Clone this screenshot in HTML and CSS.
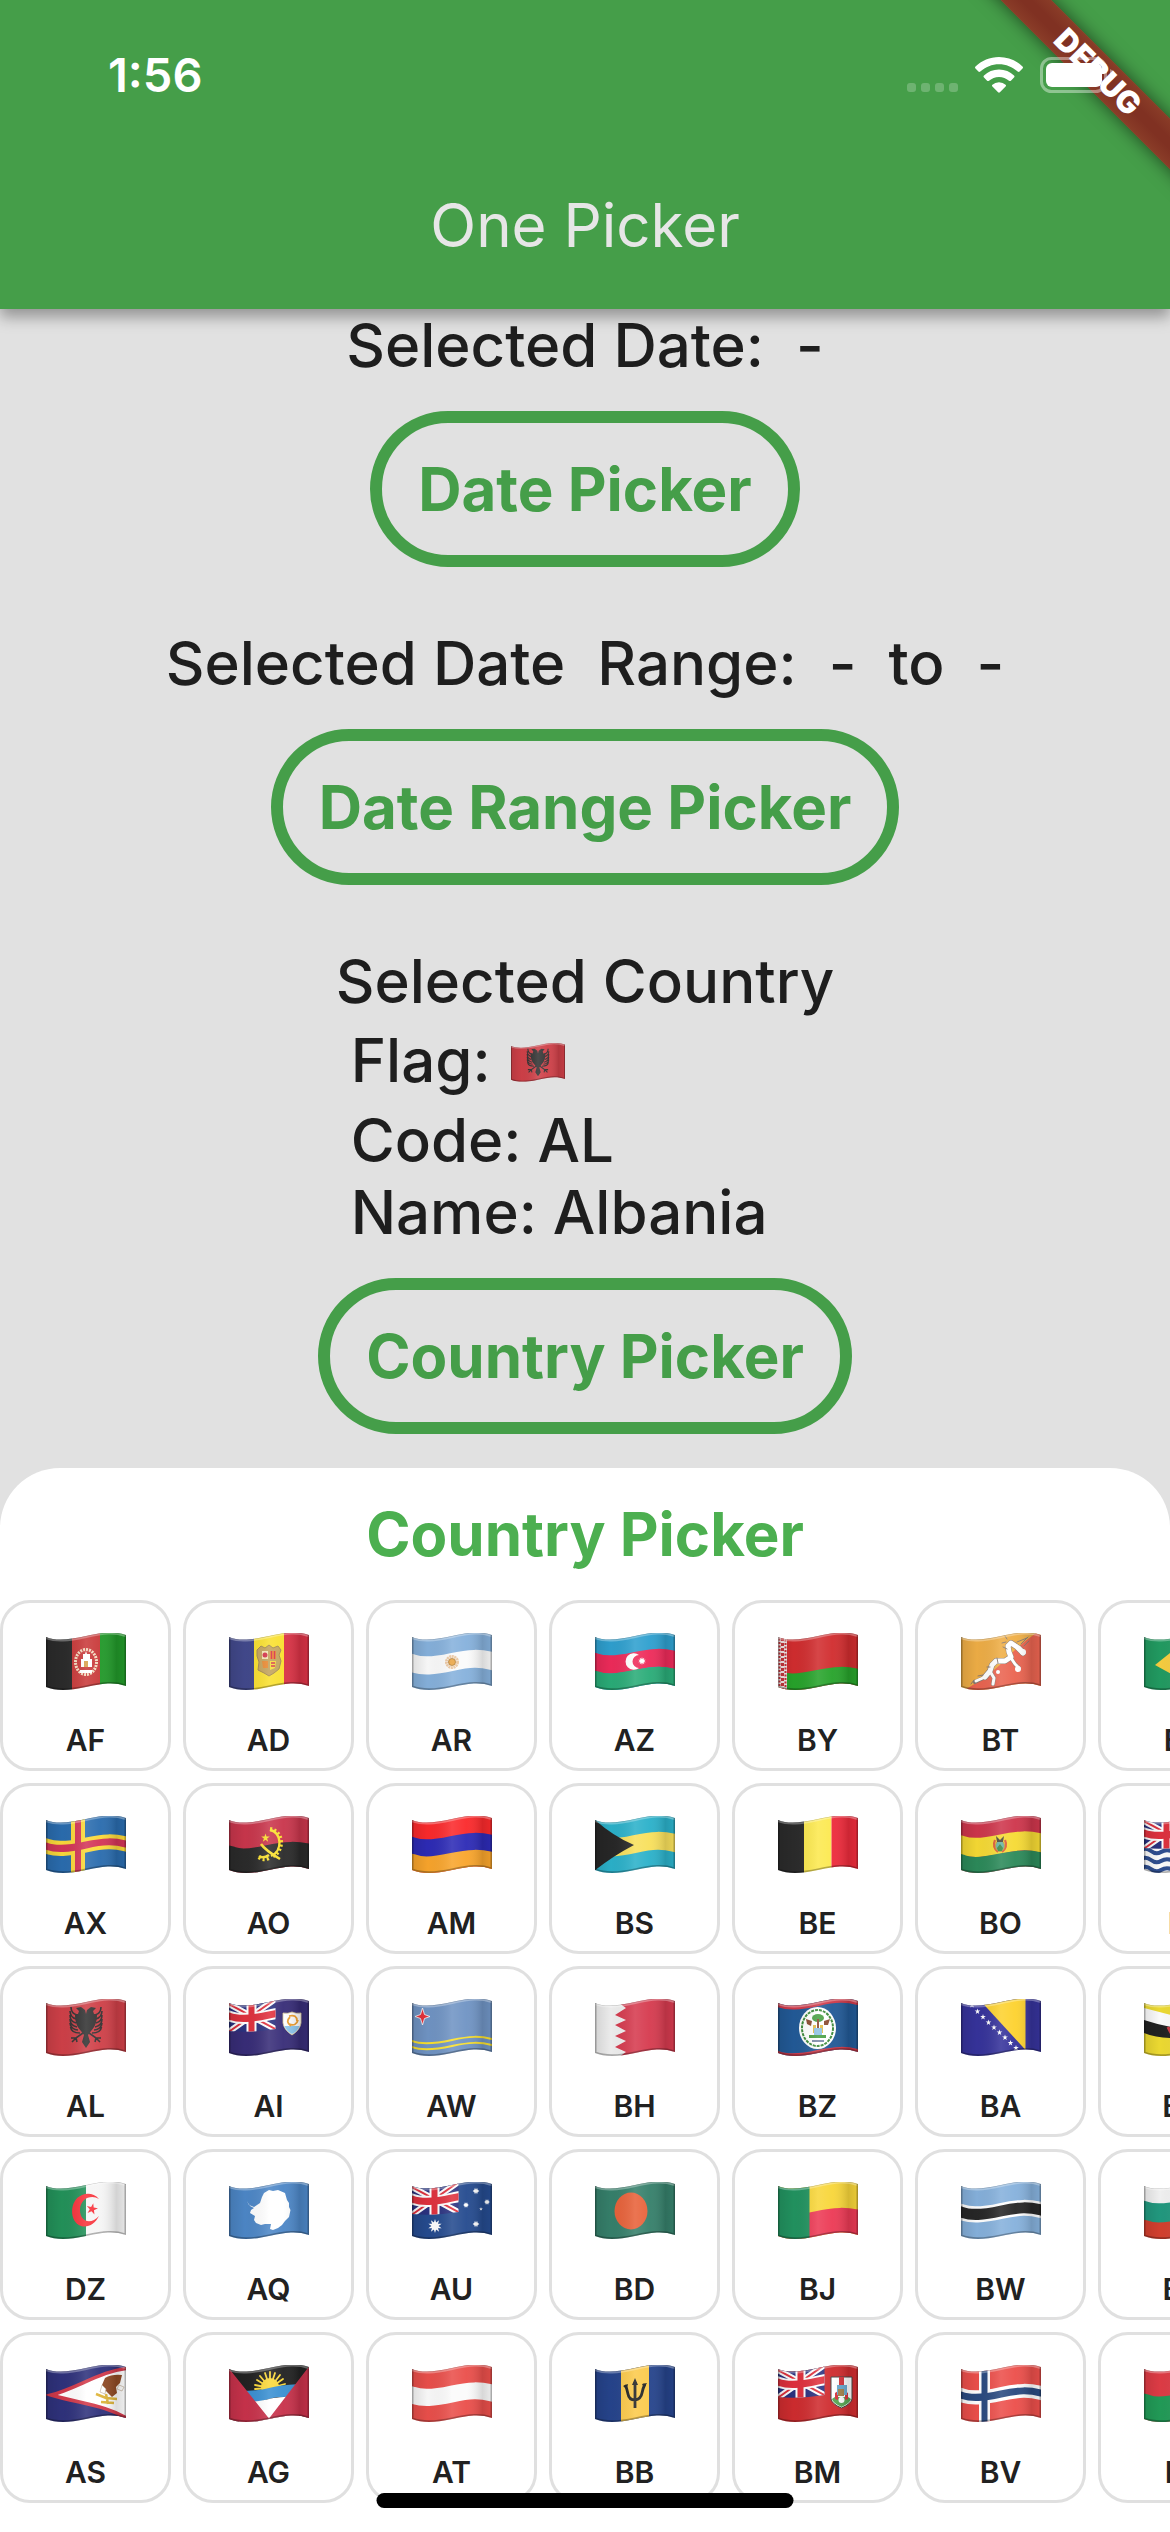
FILE: index.html
```html
<!DOCTYPE html>
<html lang="en">
<head>
<meta charset="utf-8">
<meta name="viewport" content="width=device-width, initial-scale=1">
<title>One Picker</title>
<link rel="stylesheet" href="styles.css">
</head>
<body>

<!-- Shapes shared by every flag -->
<svg class="defs" width="0" height="0" aria-hidden="true">
  <defs>
    <clipPath id="cloth"><path d="M0 4C10 8 22 7 40 3S68-2 80 2V53C68 49 58 50 40 54S10 58 0 54Z"/></clipPath>
    <clipPath id="canton-clip"><path d="M0 0H46.500V30Q22 34 0 32Z"/></clipPath>
    <linearGradient id="folds">
      <stop offset="0" stop-color="#000" stop-opacity=".12"/>
      <stop offset=".2" stop-color="#000" stop-opacity=".02"/>
      <stop offset=".5" stop-color="#fff" stop-opacity=".12"/>
      <stop offset=".68" stop-color="#fff" stop-opacity=".04"/>
      <stop offset=".88" stop-color="#000" stop-opacity=".14"/>
      <stop offset="1" stop-color="#000" stop-opacity=".06"/>
    </linearGradient>
    <path id="w" fill="none" d="M-4-1 0 0C10 4 22 3 40-1S68-5 80-2L84-1"/>
    <path id="star" d="M0-1 .22-.31 .95-.31 .36.12 .59.81 0 .38-.59.81-.36.12-.95-.31-.22-.31Z"/>
    <g id="bigstar"><use href="#star"/><use href="#star" transform="rotate(36)"/></g>
    <g id="shade">
      <path fill="url(#folds)" d="M0-2H80V60H0Z"/>
      <path fill="none" stroke="#fff" stroke-opacity=".3" stroke-width="4" d="M0 4C10 8 22 7 40 3S68-2 80 2"/>
      <path fill="none" stroke="#000" stroke-opacity=".28" stroke-width="3" d="M80 2V53C68 49 58 50 40 54S10 58 0 54V4"/>
      <path fill="none" stroke="#000" stroke-opacity=".2" stroke-width="1" d="M0 4C10 8 22 7 40 3S68-2 80 2"/>
    </g>
    <g id="canton" clip-path="url(#canton-clip)">
      <path fill="#2b3280" d="M0 0H47V34H0Z"/>
      <path stroke="#fff" stroke-width="6" d="M-2 4 48 31M48-1-2 34"/>
      <path stroke="#e0313e" stroke-width="2" d="M-2 4 48 31M48-1-2 34"/>
      <path stroke="#fff" stroke-width="10" d="M22.500 0V34"/>
      <use href="#w" y="17" stroke="#fff" stroke-width="11"/>
      <path stroke="#e0313e" stroke-width="6" d="M22.500 0V34"/>
      <use href="#w" y="17" stroke="#e0313e" stroke-width="7"/>
    </g>
    <g id="eagle-half" fill="#333" stroke="none">
      <path d="M0 15 1 11 5 8 10 9 7 12 8 15 11 15C11 21 10 27 5 32L2 36 4 43 0 49Z"/>
      <path fill="none" stroke="#333" stroke-width="1.600" d="M9 16C13 15 15 12 15 8M10 20C13 19 16 16 16 12M10 24C14 23 16 20 16 16M9 28C13 27 16 24 16 20M8 31C12 31 16 28 16 24M6 34C11 34 15 32 15.500 28M3 34 10 39 15 39M10 39 9 43M10 39 14 43"/>
    </g>
    <symbol id="flag-al" viewBox="0 0 80 57">
      <g clip-path="url(#cloth)">
        <path fill="#cf4048" d="M0-2H80V60H0Z"/>
        <use href="#eagle-half" transform="translate(40 0)"/>
        <use href="#eagle-half" transform="translate(40 0) scale(-1 1)"/>
        <use href="#shade"/>
      </g>
    </symbol>
  </defs>
</svg>

<div class="app">
  <header class="app-bar">
    <div class="banner-corner" aria-hidden="true"><span class="banner">DEBUG</span></div>
    <div class="status-bar">
      <span class="clock">1:56</span>
      <div class="status-icons">
        <svg width="51" height="36" viewBox="0 0 51 36" aria-hidden="true"><g fill="#fff" opacity=".22"><rect y="26" width="9" height="9" rx="3"/><rect x="14" y="26" width="9" height="9" rx="3"/><rect x="28" y="26" width="9" height="9" rx="3"/><rect x="42" y="26" width="9" height="9" rx="3"/></g></svg>
        <svg width="48" height="36" viewBox="0 0 48 36" role="img" aria-label="Wi-Fi"><path fill="#fff" d="M24 0C33 0 41.500 3.600 47.500 9.500Q48.500 10.600 47.500 11.600L44.600 14.600Q43.700 15.500 42.700 14.600C37.500 9.800 31 7.200 24 7.200S10.500 9.800 5.300 14.600Q4.300 15.500 3.400 14.600L.5 11.600Q-.5 10.600 .5 9.500C6.500 3.600 15 0 24 0ZM24 12.600C30 12.600 35 14.900 39 18.600Q40 19.600 39 20.600L35.900 23.700Q35 24.500 34 23.700C31 21.200 28 19.900 24 19.900S17 21.200 14 23.700Q13 24.500 12.100 23.700L9 20.600Q8 19.600 9 18.600C13 14.900 18 12.600 24 12.600ZM24 25.200Q28 25.200 30.600 27.700 31.500 28.600 30.600 29.500L24.900 35.300Q24 36.200 23.100 35.300L17.400 29.500Q16.500 28.600 17.400 27.700 20 25.200 24 25.200Z"/></svg>
        <svg width="75" height="36" viewBox="0 0 75 36" role="img" aria-label="Battery full"><rect x="1.500" y="1.500" width="64" height="33" rx="10" fill="none" stroke="#fff" stroke-opacity=".4" stroke-width="3"/><rect x="6" y="6" width="56" height="24" rx="6" fill="#fff"/><path fill="#fff" fill-opacity=".4" d="M70 12Q75 14 75 18T70 24Z"/></svg>
      </div>
    </div>
    <h1 class="app-title">One Picker</h1>
  </header>

  <main class="content">
    <section class="group">
      <p class="line">Selected Date:&nbsp; -</p>
      <button class="pill" type="button">Date Picker</button>
    </section>
    <section class="group">
      <p class="line">Selected Date&nbsp; Range:&nbsp; -&nbsp; to&nbsp; -</p>
      <button class="pill" type="button">Date Range Picker</button>
    </section>
    <section class="group">
      <div class="country">
        <p class="line">Selected Country</p>
        <div class="details">
          <p class="line flag-line">Flag: <svg class="mini-flag" role="img" aria-label="Albania"><use href="#flag-al"/></svg></p>
          <p class="line">Code: AL</p>
          <p class="line">Name: Albania</p>
        </div>
      </div>
      <button class="pill" type="button">Country Picker</button>
    </section>
  </main>

  <section class="sheet">
    <h2 class="sheet-title">Country Picker</h2>
    <div class="grid">
      <button class="card" type="button"><svg class="flag" viewBox="0 0 80 57" aria-hidden="true"><g clip-path="url(#cloth)"><path fill="#2b2b2b" d="M0-2H26V60H0Z"/><path fill="#c93a3a" d="M26-2H54V60H26Z"/><path fill="#22992a" d="M54-2H80V60H54Z"/><ellipse cx="40" cy="29" rx="10.500" ry="12.500" fill="none" stroke="#f3dcc0" stroke-width="3" stroke-dasharray="2 1"/><path fill="#fff" d="M35 34V26H37V21H39L40 18 41 21H44V26H46V34ZM34 37H46V40H34Z"/><path fill="#d8a04a" d="M38 34V28H42V34Z"/><use href="#shade"/></g></svg><span>AF</span></button>
      <button class="card" type="button"><svg class="flag" viewBox="0 0 80 57" aria-hidden="true"><g clip-path="url(#cloth)"><path fill="#2a6cae" d="M0-2H80V60H0Z"/><path stroke="#fbd93a" stroke-width="14" d="M32-2V60"/><use href="#w" y="30" stroke="#fbd93a" stroke-width="15"/><path stroke="#d33558" stroke-width="6" d="M32-2V60"/><use href="#w" y="30" stroke="#d33558" stroke-width="7"/><use href="#shade"/></g></svg><span>AX</span></button>
      <button class="card" type="button"><svg class="flag" aria-hidden="true"><use href="#flag-al"/></svg><span>AL</span></button>
      <button class="card" type="button"><svg class="flag" viewBox="0 0 80 57" aria-hidden="true"><g clip-path="url(#cloth)"><path fill="#23925a" d="M0-2H40V60H0Z"/><path fill="#f5f5f5" d="M40-2H80V60H40Z"/><path fill="#f8333c" d="M53 17C48 11 41 11 36 13 23 18 23 40 35 44 42 46 49 42 53 34 45 43 34 40 34 28S46 12 53 17Z"/><use href="#star" fill="#f8333c" transform="translate(46 27) rotate(12) scale(6)"/><use href="#shade"/></g></svg><span>DZ</span></button>
      <button class="card" type="button"><svg class="flag" viewBox="0 0 80 57" aria-hidden="true"><g clip-path="url(#cloth)"><path fill="#2f327c" d="M0-2H80V60H0Z"/><path fill="#fff" stroke="#d23a4b" stroke-width="3.500" d="M5 30C30 24 56 5 84 3V55C60 40 36 39 5 30Z"/><path fill="#8f4a24" d="M56 20 59 13Q66 9 76 10L74 18 70 22 71 28 66 32 60 26 56 27Z"/><path fill="#fff" stroke="#b8a58c" stroke-width=".6" d="M56 20 60 24 59 29 54 27ZM73 20 78 22 76 26 71 24Z"/><path fill="none" stroke="#dfb63c" stroke-width="2.500" d="M50 29 60 33 71 34M55 37 68 38M60 29 62 39"/><use href="#shade"/></g></svg><span>AS</span></button>

      <button class="card" type="button"><svg class="flag" viewBox="0 0 80 57" aria-hidden="true"><g clip-path="url(#cloth)"><path fill="#42498c" d="M0-2H25V60H0Z"/><path fill="#f9e02f" d="M25-2H55V60H25Z"/><path fill="#db3346" d="M55-2H80V60H55Z"/><path fill="#c3a35c" stroke="#a38a50" stroke-width="1" d="M28 17 32 13 36 15 40 12 44 15 49 13 52 17 50 22 52 28 50 36 45 40 40 43 35 40 29 37 30 29 28 23Z"/><path fill="#f4e5b5" d="M33 18H39V26H33Z"/><circle cx="36" cy="22" r="2.500" fill="#d5344a"/><path fill="#e98a32" d="M41 18H47V26H41ZM33 28H39V35H34Z"/><path fill="#f5dc3c" d="M41 28H47L46 35 41 37Z"/><path stroke="#d5344a" stroke-width="1.300" d="M42.500 18V26M45.500 18V26M42 30H46M42 33H46"/><use href="#shade"/></g></svg><span>AD</span></button>
      <button class="card" type="button"><svg class="flag" viewBox="0 0 80 57" aria-hidden="true"><g clip-path="url(#cloth)"><path fill="#c9364c" d="M0-2H80V60H0Z"/><use href="#w" y="48" stroke="#2b2b2b" stroke-width="36"/><path fill="none" stroke="#f9e02f" stroke-width="2.400" d="M41 14C53 16 54 35 42 40"/><path fill="none" stroke="#f9e02f" stroke-width="4" stroke-dasharray="2 2.200" d="M41 13C55 15 56 36 42 41M30 41Q34 45 40 42"/><path fill="none" stroke="#f9e02f" stroke-width="2.600" d="M32 28Q36 34 51 43M30 40Q34 43 40 39"/><use href="#star" fill="#f9e02f" transform="translate(36.500 22) scale(4.500)"/><use href="#shade"/></g></svg><span>AO</span></button>
      <button class="card" type="button"><svg class="flag" viewBox="0 0 80 57" aria-hidden="true"><g clip-path="url(#cloth)"><path fill="#382d78" d="M0-2H80V60H0Z"/><use href="#canton"/><path fill="#fff" stroke="#d9c995" stroke-width=".8" d="M54 14Q59 15 63 13 67 15 72 14V24Q71 31 63 36 55 31 54 24Z"/><path fill="#8fc8ef" d="M55.500 27H70.500Q69 32 63 35 57 32 55.500 27Z"/><path fill="none" stroke="#f0a030" stroke-width="1.800" d="M60 17Q68 15 68 22M69 21Q67 28 60 25M62 27Q56 23 61 18"/><use href="#shade"/></g></svg><span>AI</span></button>
      <button class="card" type="button"><svg class="flag" viewBox="0 0 80 57" aria-hidden="true"><g clip-path="url(#cloth)"><path fill="#4d87c7" d="M0-2H80V60H0Z"/><path fill="#fff" d="M18 19 20 23 25 25 31 21 33 15 35 11 40 8 44 9 49 8 56 11 58 18 60 21 60 25 61.500 28 60 35 56 39 53 43 49 46 44 48 41 47 42 42 36 42 32 43 27 41 25 38 26 34 21 31 22 28 25 26 21 24Z"/><use href="#shade"/></g></svg><span>AQ</span></button>
      <button class="card" type="button"><svg class="flag" viewBox="0 0 80 57" aria-hidden="true"><g clip-path="url(#cloth)"><path fill="#222" d="M0-4H80V60H0Z"/><path stroke="#fbd93a" stroke-width="1.800" stroke-linecap="round" d="M41 23V7M41 23 36 8M41 23 46 8M41 23 31 11M41 23 51 10M41 23 28 15M41 23 54 14M41 23 26 20M41 23 56 19M41 23 26 24"/><circle cx="41" cy="22" r="9" fill="#fbd93a"/><path fill="#3a90d2" d="M10 26Q30 26 40 23T70 19V32Q48 31 40 34T10 38Z"/><path fill="#fff" d="M10 38Q33 36 40 34T70 31V60H10Z"/><path fill="#c8324b" d="M-2 1 40 53.500 82-1V60H-2Z"/><use href="#shade"/></g></svg><span>AG</span></button>

      <button class="card" type="button"><svg class="flag" viewBox="0 0 80 57" aria-hidden="true"><g clip-path="url(#cloth)"><path fill="#86b1dc" d="M0-2H80V60H0Z"/><use href="#w" y="30" stroke="#fbfbfb" stroke-width="18"/><circle cx="40" cy="29" r="5.500" fill="none" stroke="#eac6a0" stroke-width="3" stroke-dasharray="2 .5"/><circle cx="40" cy="29" r="3.500" fill="#eaa545" stroke="#a8732c" stroke-width=".8"/><use href="#shade"/></g></svg><span>AR</span></button>
      <button class="card" type="button"><svg class="flag" viewBox="0 0 80 57" aria-hidden="true"><g clip-path="url(#cloth)"><path fill="#fb2a2c" d="M0-2H80V60H0Z"/><use href="#w" y="30" stroke="#2d2bb6" stroke-width="18"/><use href="#w" y="50" stroke="#f9a52c" stroke-width="24"/><use href="#shade"/></g></svg><span>AM</span></button>
      <button class="card" type="button"><svg class="flag" viewBox="0 0 80 57" aria-hidden="true"><g clip-path="url(#cloth)"><path fill="#7094c4" d="M0-2H80V60H0Z"/><use href="#w" y="42" stroke="#f9e02f" stroke-width="2"/><use href="#w" y="48" stroke="#f9e02f" stroke-width="2"/><path fill="#e8323c" stroke="#fff" stroke-width=".8" d="M10.500 9 12.500 15.500 18 17.500 12.500 19.500 10.500 26 8.500 19.500 3 17.500 8.500 15.500Z"/><use href="#shade"/></g></svg><span>AW</span></button>
      <button class="card" type="button"><svg class="flag" viewBox="0 0 80 57" aria-hidden="true"><g clip-path="url(#cloth)"><path fill="#254b8f" d="M0-2H80V60H0Z"/><use href="#canton"/><g fill="#fff"><use href="#bigstar" transform="translate(23 44) scale(7)"/><use href="#bigstar" transform="translate(64 9) scale(3.500)"/><use href="#bigstar" transform="translate(75 20) scale(3)"/><use href="#bigstar" transform="translate(54 23) scale(3)"/><use href="#star" transform="translate(69 27) scale(2)"/><use href="#bigstar" transform="translate(64 42) scale(3.500)"/></g><use href="#shade"/></g></svg><span>AU</span></button>
      <button class="card" type="button"><svg class="flag" viewBox="0 0 80 57" aria-hidden="true"><g clip-path="url(#cloth)"><path fill="#ea4f4b" d="M0-2H80V60H0Z"/><use href="#w" y="30" stroke="#fbfbfb" stroke-width="17"/><use href="#shade"/></g></svg><span>AT</span></button>

      <button class="card" type="button"><svg class="flag" viewBox="0 0 80 57" aria-hidden="true"><g clip-path="url(#cloth)"><path fill="#2fa0cf" d="M0-2H80V60H0Z"/><use href="#w" y="29" stroke="#ee2b5a" stroke-width="18"/><use href="#w" y="50" stroke="#2aac78" stroke-width="24"/><path fill="#fff" d="M44 22A8.300 8.300 0 1 0 44 35 6.500 6.500 0 1 1 44 22Z"/><use href="#bigstar" fill="#fff" transform="translate(47 28) scale(4)"/><use href="#shade"/></g></svg><span>AZ</span></button>
      <button class="card" type="button"><svg class="flag" viewBox="0 0 80 57" aria-hidden="true"><g clip-path="url(#cloth)"><path fill="#2bb1ca" d="M0-2H80V60H0Z"/><use href="#w" y="29" stroke="#f8e05c" stroke-width="18"/><path fill="#272727" d="M-1 3Q18 20 39 29 18 40-1 55Z"/><use href="#shade"/></g></svg><span>BS</span></button>
      <button class="card" type="button"><svg class="flag" viewBox="0 0 80 57" aria-hidden="true"><g clip-path="url(#cloth)"><path fill="#f0f0f0" d="M0-2H40V60H0Z"/><path fill="#d63b4f" d="M24 4 31 9 20 16 31 21 20 26 31 32 20 37 31 42 20 48 31 53 24 58H80V-2H24Z"/><use href="#shade"/></g></svg><span>BH</span></button>
      <button class="card" type="button"><svg class="flag" viewBox="0 0 80 57" aria-hidden="true"><g clip-path="url(#cloth)"><path fill="#36806b" d="M0-2H80V60H0Z"/><ellipse cx="36" cy="29" rx="16.500" ry="18.500" fill="#e8623a"/><use href="#shade"/></g></svg><span>BD</span></button>
      <button class="card" type="button"><svg class="flag" viewBox="0 0 80 57" aria-hidden="true"><g clip-path="url(#cloth)"><path fill="#26448c" d="M0-2H80V60H0Z"/><path fill="#fcca4b" d="M26-2H54V60H26Z"/><path fill="none" stroke="#222" stroke-width="2.800" d="M40 17V43M30 20Q32 23 33 29 34 35 40 35M50 19Q48 23 47 28 46 34 40 35"/><path fill="#222" d="M40 13 43 20H37ZM28 21 33 19 32 24ZM52 18 47 19 49 23Z"/><use href="#shade"/></g></svg><span>BB</span></button>

      <button class="card" type="button"><svg class="flag" viewBox="0 0 80 57" aria-hidden="true"><g clip-path="url(#cloth)"><path fill="#d12d2f" d="M0-2H80V60H0Z"/><use href="#w" y="50" stroke="#27a32b" stroke-width="24"/><path fill="#f4e9e9" d="M0-2H9V60H0Z"/><path stroke="#c8363c" stroke-width="2" stroke-dasharray="2 1.500" d="M1.500 2V58M7.500 3V58"/><path stroke="#c8363c" stroke-width="3" stroke-dasharray="3 2" d="M4.500 5V58"/><use href="#shade"/></g></svg><span>BY</span></button>
      <button class="card" type="button"><svg class="flag" viewBox="0 0 80 57" aria-hidden="true"><g clip-path="url(#cloth)"><path fill="#2b2b2b" d="M0-2H26V60H0Z"/><path fill="#fce94f" d="M26-2H53.500V60H26Z"/><path fill="#ee2c3c" d="M53.500-2H80V60H53.500Z"/><use href="#shade"/></g></svg><span>BE</span></button>
      <button class="card" type="button"><svg class="flag" viewBox="0 0 80 57" aria-hidden="true"><g clip-path="url(#cloth)"><path fill="#225a97" d="M0-2H80V60H0Z"/><use href="#w" y="5" stroke="#cf3a4a" stroke-width="6"/><use href="#w" y="55" stroke="#cf3a4a" stroke-width="6"/><ellipse cx="39.500" cy="29" rx="18.500" ry="21" fill="#fff"/><ellipse cx="39.500" cy="29" rx="15.500" ry="18" fill="none" stroke="#3c8a3a" stroke-width="2" stroke-dasharray="3 1"/><ellipse cx="40" cy="19" rx="6" ry="4" fill="#4aa044"/><path fill="#8a4a30" d="M28 20 34 22 33 27 29 25ZM46 22 52 20 50 26 46 26ZM39 20H41V30H39Z"/><path fill="#e3bd4a" d="M35 26H38V34H35ZM42 26H45V34H42Z"/><path fill="#8fc3e4" d="M36 29H44V36H36Z"/><path fill="#4aa044" d="M31 36H48V39H31Z"/><path fill="#7d8ca8" d="M34 41H46V43H34Z"/><use href="#shade"/></g></svg><span>BZ</span></button>
      <button class="card" type="button"><svg class="flag" viewBox="0 0 80 57" aria-hidden="true"><g clip-path="url(#cloth)"><path fill="#f8d63a" d="M0-2H80V60H0Z"/><use href="#w" y="46" stroke="#ec3a55" stroke-width="32"/><path fill="#229360" d="M0-2H31.500V60H0Z"/><use href="#shade"/></g></svg><span>BJ</span></button>
      <button class="card" type="button"><svg class="flag" viewBox="0 0 80 57" aria-hidden="true"><g clip-path="url(#cloth)"><path fill="#cf2c2f" d="M0-2H80V60H0Z"/><use href="#canton"/><path fill="#fff" stroke="#444" stroke-width="1" d="M53 12H74V34Q73 39 63.500 43 54 39 53 34Z"/><path fill="#58a854" d="M54 34Q58 30 63.500 33 69 30 73 34 72 38 63.500 42 55 38 54 34Z"/><path fill="#d8343c" d="M61 12H66V20H61ZM57 28 60 26 60 35 57 34ZM67 26 70 28V34L67 35Z"/><path fill="#6aa9cf" d="M59 20H69V30H59Z"/><path fill="#a5824a" d="M60 24H66V31H60Z"/><circle cx="63.500" cy="35" r="3" fill="#fff"/><use href="#shade"/></g></svg><span>BM</span></button>

      <button class="card" type="button"><svg class="flag" viewBox="0 0 80 57" aria-hidden="true"><g clip-path="url(#cloth)"><path fill="#efae46" d="M0-2H80V60H0Z"/><path fill="#ea6450" d="M2 58Q30 42 45 26T78-2H82V60Z"/><g fill="none" stroke-linejoin="round" stroke-linecap="round"><path stroke="#8a7a70" stroke-width="6" d="M62 20 56 14 50 10 47 13 48 19 50 24 44 28 35 28 31 32 29 38 24 44"/><path stroke="#8a7a70" stroke-width="4" d="M24 44 14 49M50 25 54 31 58 35M30 40 33 45 32 51M58 14 63 19"/><path stroke="#fff" stroke-width="5" d="M62 20 56 14 50 10 47 13 48 19 50 24 44 28 35 28 31 32 29 38 24 44"/><path stroke="#fff" stroke-width="3" d="M24 44 15 48M50 25 54 31 58 35M30 40 33 45 32 51M58 14 63 19"/><path stroke="#8a7a70" stroke-width="1" d="M45 9 41 10M46 6 44 3M56 9 66 5M60 11 67 4M63 13 68 8M22 42 17 43M13 47 10 51M42 14 46 16M36 25 37 30M29 34 26 34"/></g><circle cx="37" cy="39" r="2" fill="#fff"/><circle cx="57" cy="36" r="3" fill="#fff"/><circle cx="62" cy="19" r="3" fill="#fff"/><use href="#shade"/></g></svg><span>BT</span></button>
      <button class="card" type="button"><svg class="flag" viewBox="0 0 80 57" aria-hidden="true"><g clip-path="url(#cloth)"><path fill="#ce364c" d="M0-2H80V60H0Z"/><use href="#w" y="29" stroke="#f6da34" stroke-width="19"/><use href="#w" y="51" stroke="#2c8a5a" stroke-width="25"/><path fill="none" stroke="#dd5a38" stroke-width="2.200" d="M34 24Q31 31 37 36M44 24Q47 31 41 36"/><ellipse cx="39" cy="30" rx="4.500" ry="5.500" fill="#66b3a4" stroke="#c79a34" stroke-width="1"/><path fill="#4c4638" d="M35 20 39 24 43 20 42 26H36Z"/><path fill="#3d8a44" d="M36 32 39 28 42 32 41 35H37Z"/><use href="#shade"/></g></svg><span>BO</span></button>
      <button class="card" type="button"><svg class="flag" viewBox="0 0 80 57" aria-hidden="true"><g clip-path="url(#cloth)"><path fill="#36339b" d="M0-2H80V60H0Z"/><path fill="#fdd22f" d="M16-2H64.500V51Z"/><g fill="#fff"><use href="#star" transform="translate(11 6) scale(3)"/><use href="#star" transform="translate(16.500 12.500) scale(3)"/><use href="#star" transform="translate(22 18) scale(3)"/><use href="#star" transform="translate(27.500 23.500) scale(3)"/><use href="#star" transform="translate(33 28.500) scale(3)"/><use href="#star" transform="translate(38.500 33.500) scale(3)"/><use href="#star" transform="translate(44 38.500) scale(3)"/><use href="#star" transform="translate(49.500 44) scale(3)"/><use href="#star" transform="translate(55 49) scale(3)"/></g><use href="#shade"/></g></svg><span>BA</span></button>
      <button class="card" type="button"><svg class="flag" viewBox="0 0 80 57" aria-hidden="true"><g clip-path="url(#cloth)"><path fill="#86b1dc" d="M0-2H80V60H0Z"/><use href="#w" y="30" stroke="#fff" stroke-width="16"/><use href="#w" y="30" stroke="#272727" stroke-width="11"/><use href="#shade"/></g></svg><span>BW</span></button>
      <button class="card" type="button"><svg class="flag" viewBox="0 0 80 57" aria-hidden="true"><g clip-path="url(#cloth)"><path fill="#ec4f4b" d="M0-2H80V60H0Z"/><path stroke="#fff" stroke-width="11" d="M23.500-2V60"/><use href="#w" y="30" stroke="#fff" stroke-width="14"/><path stroke="#2a4a80" stroke-width="6" d="M23.500-2V60"/><use href="#w" y="30" stroke="#2a4a80" stroke-width="7"/><use href="#shade"/></g></svg><span>BV</span></button>

      <button class="card" type="button"><svg class="flag" viewBox="0 0 80 57" aria-hidden="true"><g clip-path="url(#cloth)"><path fill="#229c62" d="M0-2H80V60H0Z"/><path fill="#f9cf40" d="M11 32 40 9 69 25 40 48Z"/><circle cx="40" cy="28" r="11" fill="#2c4c94"/><use href="#shade"/></g></svg><span>BR</span></button>
      <button class="card" type="button"><svg class="flag" viewBox="0 0 80 57" aria-hidden="true"><g clip-path="url(#cloth)"><path fill="#fff" d="M0-2H80V60H0Z"/><path fill="none" stroke="#2f4f92" stroke-width="4" d="M-3 34Q2 31 7 35T17 36 27 35 37 36 47 33 57 34 67 31 77 33 87 32M-3 43Q2 40 7 44T17 45 27 44 37 45 47 42 57 43 67 40 77 42 87 41M-3 52Q2 49 7 53T17 54 27 53 37 54 47 51 57 52 67 49 77 51 87 50M46 6Q52 3 57 6T67 5 77 6 87 5M46 15Q52 12 57 15T67 14 77 15 87 14M46 24Q52 21 57 24T67 23 77 24 87 23"/><use href="#canton"/><use href="#shade"/></g></svg><span>IO</span></button>
      <button class="card" type="button"><svg class="flag" viewBox="0 0 80 57" aria-hidden="true"><g clip-path="url(#cloth)"><path fill="#f0dd32" d="M0-2H80V60H0Z"/><path fill="#fff" d="M0 9 80 30V46L0 24Z"/><path fill="#222" d="M0 21Q15 26 28 28L80 42V52L28 39Q12 39 0 34Z"/><path fill="none" stroke="#cf3a44" stroke-width="3" d="M24 28Q30 42 40 41T54 28M40 12V42"/><use href="#shade"/></g></svg><span>BN</span></button>
      <button class="card" type="button"><svg class="flag" viewBox="0 0 80 57" aria-hidden="true"><g clip-path="url(#cloth)"><path fill="#f4f4f4" d="M0-2H80V60H0Z"/><use href="#w" y="29" stroke="#229a80" stroke-width="20"/><use href="#w" y="50" stroke="#d5402f" stroke-width="24"/><use href="#shade"/></g></svg><span>BG</span></button>
      <button class="card" type="button"><svg class="flag" viewBox="0 0 80 57" aria-hidden="true"><g clip-path="url(#cloth)"><path fill="#e03c46" d="M0-2H80V60H0Z"/><use href="#w" y="46" stroke="#229c58" stroke-width="34"/><use href="#star" fill="#f9d53c" transform="translate(40 28) scale(9)"/><use href="#shade"/></g></svg><span>BF</span></button>
    </div>
  </section>
</div>

<div class="home-indicator"></div>
</body>
</html>
```
FILE: styles.css
```css
:root {
  --green: #459e49;
  --sheet-green: #4caf50;
  --surface: #e1e1e1;
  --ink: #1e1e1e;
  --outline: #e0e0e0;
}

* {
  box-sizing: border-box;
}

body {
  margin: 0;
  background: var(--surface);
  color: var(--ink);
  font-family: Inter, "Liberation Sans", sans-serif;
}

h1, h2, p {
  margin: 0;
}

button {
  font-family: inherit;
  cursor: pointer;
}

.defs {
  position: absolute;
}

.app {
  display: flex;
  flex-direction: column;
  min-height: 100vh;
}

/* App bar */

.app-bar {
  position: relative;
  z-index: 1;
  background: var(--green);
  box-shadow: 0 8px 14px rgba(0, 0, 0, .34);
}

.status-bar {
  position: relative;
  display: flex;
  justify-content: space-between;
  align-items: center;
  height: 141px;
  padding: 8px 55px 0 108px;
}

.clock {
  color: #fff;
  font-size: 47px;
  font-weight: 600;
  line-height: 56px;
}

.status-icons {
  display: flex;
  gap: 17px;
}

.app-title {
  color: #e6e6e6;
  font-size: 60px;
  font-weight: 400;
  line-height: 168px;
  text-align: center;
}

.banner-corner {
  position: absolute;
  top: 0;
  right: 0;
  width: 240px;
  height: 240px;
  overflow: hidden;
}

.banner {
  position: absolute;
  top: 54px;
  left: 18px;
  width: 300px;
  transform: rotate(45deg);
  background: linear-gradient(#8a3d28, #803122 40%, #803122 60%, #8a3d28);
  box-shadow: 0 0 18px rgba(0, 0, 0, .55);
  color: #fff;
  font-size: 31px;
  font-weight: 900;
  line-height: 36px;
  text-align: center;
}

/* Selections */

.content {
  display: flex;
  flex-direction: column;
  gap: 60px;
  padding-bottom: 34px;
}

.group {
  display: flex;
  flex-direction: column;
  align-items: center;
  gap: 30px;
}

.line {
  font-size: 60px;
  font-weight: 500;
  line-height: 72px;
}

.details {
  padding-left: 15px;
}

.flag-line {
  line-height: 87px;
}

.mini-flag {
  width: 54px;
  height: 39px;
  margin-left: 4px;
}

.pill {
  height: 156px;
  padding: 0 36px;
  border: 12px solid var(--green);
  border-radius: 78px;
  background: none;
  color: var(--green);
  font-size: 60px;
  font-weight: 700;
}

/* Country sheet */

.sheet {
  flex: 1;
  padding: 30px 0 29px;
  border-radius: 60px 60px 0 0;
  background: #fff;
}

.sheet-title {
  margin-bottom: 30px;
  color: var(--sheet-green);
  font-size: 60px;
  font-weight: 700;
  line-height: 72px;
  text-align: center;
}

.grid {
  display: grid;
  grid-template-rows: repeat(5, 171px);
  grid-auto-flow: column;
  grid-auto-columns: 171px;
  gap: 12px;
  overflow-x: auto;
  scrollbar-width: none;
}

.card {
  display: flex;
  flex-direction: column;
  align-items: center;
  gap: 32px;
  padding: 30px 0 0;
  border: 3px solid var(--outline);
  border-radius: 30px;
  background: none;
  color: #212121;
  font-size: 30px;
  font-weight: 600;
  line-height: 36px;
}

.flag {
  width: 80px;
  height: 57px;
}

.home-indicator {
  position: fixed;
  bottom: 24px;
  left: 50%;
  width: 417px;
  height: 15px;
  transform: translateX(-50%);
  border-radius: 8px;
  background: #000;
}
```
